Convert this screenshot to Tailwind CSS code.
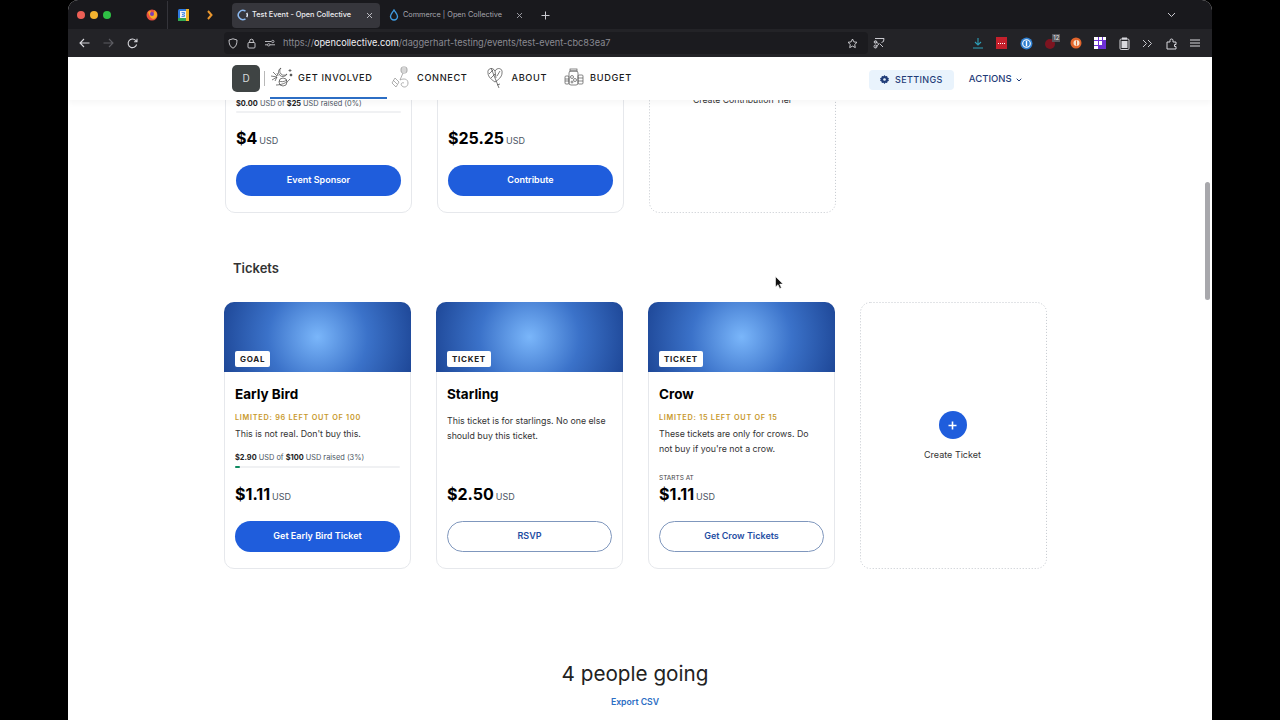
<!DOCTYPE html>
<html lang="en">
<head>
    <meta charset="UTF-8">
    <title>Test Event - Open Collective</title>
    <script src="https://cdn.jsdelivr.net/npm/@tailwindcss/browser@4"></script>
</head>
<body class="bg-black font-['Inter',sans-serif] overflow-hidden">
<div class="ml-[68px] w-[1144px] h-[720px] rounded-t-[10px] overflow-hidden flex flex-col bg-white relative">

    <!-- tab bar -->
    <div class="h-[29px] pt-[1px] bg-[#19191d] flex items-center shrink-0 text-[#e4e4e8]">
        <div class="flex gap-[5px] ml-[9px]">
            <span class="w-[8px] h-[8px] rounded-full bg-[#ec5f56]"></span>
            <span class="w-[8px] h-[8px] rounded-full bg-[#f4b32f]"></span>
            <span class="w-[8px] h-[8px] rounded-full bg-[#2fc045]"></span>
        </div>
        <svg class="ml-[35px]" width="12" height="12" viewBox="0 0 12 12"><circle cx="6" cy="6" r="5.5" fill="#e8503f"/><path d="M2 3c1 3 2 6 5 7 2 0 4-2 4-4 0-2-1-4-3-5 1 2 0 3-2 3-1 0-2-1-1-2-1 0-2 0-3 1z" fill="#f9a825"/><circle cx="6" cy="5" r="2" fill="#7b3fb8"/></svg>
        <span class="ml-[9px] w-px h-[29px] bg-[#34343a]"></span>
        <svg class="ml-[10px]" width="11" height="12" viewBox="0 0 11 12"><rect width="11" height="12" rx="1.5" fill="#2f7be0"/><rect x="8" width="3" height="12" fill="#f0b429"/><rect y="9" width="8" height="3" fill="#32a852"/><rect x="2" y="2" width="6" height="7" fill="#f1f1f4"/><path d="M3.5 3.5h3v1.5h-2v1h2v1.5h-3" fill="none" stroke="#2f7be0" stroke-width=".8"/></svg>
        <svg class="ml-[18px]" width="6" height="10" viewBox="0 0 6 10"><path d="M1 1l3.5 4L1 9" fill="none" stroke="#e8962e" stroke-width="2"/></svg>
        <!-- active tab -->
        <div class="ml-[19px] w-[148px] h-[25px] rounded-[4px] bg-[#36363c] flex items-center pl-[5px]">
            <svg width="12" height="12" viewBox="0 0 12 12"><path d="M8.5 2.2A4.6 4.6 0 1 0 8.5 9.8" fill="none" stroke="#8ab8f0" stroke-width="1.5"/><path d="M9.8 3.8a4.6 4.6 0 0 1 0 4.4" fill="none" stroke="#dfe8f5" stroke-width="1.5"/></svg>
            <span class="ml-[3px] w-[114px] text-[7.300px] font-medium text-[#ececf0] whitespace-nowrap">Test Event - Open Collective</span>
            <svg width="7" height="7" viewBox="0 0 7 7"><path d="M1 1l5 5M6 1L1 6" stroke="#c9c9cf" stroke-width=".9"/></svg>
        </div>
        <!-- second tab -->
        <div class="w-[150px] flex items-center pl-[9px]">
            <svg width="10" height="12" viewBox="0 0 10 12"><path d="M5 1C3.5 3.5 1.500 5 1.500 7.500a3.500 3.500 0 0 0 7 0C8.500 5 6.500 3.500 5 1z" fill="none" stroke="#3f9be0" stroke-width="1.400"/></svg>
            <span class="ml-[4px] w-[113px] text-[7.300px] text-[#a6a6ad] whitespace-nowrap">Commerce | Open Collective</span>
            <svg width="7" height="7" viewBox="0 0 7 7"><path d="M1 1l5 5M6 1L1 6" stroke="#a6a6ad" stroke-width=".9"/></svg>
        </div>
        <svg class="ml-[11px]" width="9" height="9" viewBox="0 0 9 9"><path d="M4.500 .5v8M.5 4.500h8" stroke="#c9c9cf" stroke-width="1"/></svg>
        <svg class="ml-[617px]" width="9" height="6" viewBox="0 0 9 6"><path d="M1 1l3.500 3.500L8 1" fill="none" stroke="#c9c9cf" stroke-width="1"/></svg>
    </div>

    <!-- toolbar -->
    <div class="h-[28px] bg-[#232327] flex items-center shrink-0">
        <svg class="ml-[11px]" width="11" height="10" viewBox="0 0 11 10"><path d="M10.500 5H1M5 1L1 5l4 4" fill="none" stroke="#d8d8dd" stroke-width="1.100"/></svg>
        <svg class="ml-[13px]" width="11" height="10" viewBox="0 0 11 10"><path d="M.5 5H10M6 1l4 4-4 4" fill="none" stroke="#5c5c62" stroke-width="1.100"/></svg>
        <svg class="ml-[13px]" width="11" height="11" viewBox="0 0 11 11"><path d="M9.600 6.500A4.300 4.300 0 1 1 8.600 2.400L10 3.600M10 .8v2.900H7.100" fill="none" stroke="#d8d8dd" stroke-width="1.100"/></svg>
        <!-- url bar -->
        <div class="ml-[86px] w-[644px] h-[22px] bg-[#1b1b1f] rounded-[4px] flex items-center pl-[4px]">
            <svg width="10" height="11" viewBox="0 0 10 11"><path d="M5 .8l4 1.200c0 4-1 6.800-4 8.200C2 8.800 1 6 1 2z" fill="none" stroke="#d2d2d7" stroke-width=".9"/></svg>
            <svg class="ml-[9px]" width="9" height="11" viewBox="0 0 9 11"><rect x="1" y="4.500" width="7" height="5.500" rx="1" fill="none" stroke="#d2d2d7" stroke-width=".9"/><path d="M2.700 4.500V3a1.800 1.800 0 0 1 3.600 0v1.500" fill="none" stroke="#d2d2d7" stroke-width=".9"/></svg>
            <svg class="ml-[9px]" width="10" height="8" viewBox="0 0 10 8"><path d="M0 2.500h6M0 5.800h2.500M5 5.800h5" stroke="#c9c9cf" stroke-width=".9"/><circle cx="7.800" cy="2.500" r="1.200" fill="none" stroke="#c9c9cf" stroke-width=".8"/><circle cx="3.700" cy="5.800" r="1.200" fill="none" stroke="#c9c9cf" stroke-width=".8"/></svg>
            <span class="ml-[8px] w-[564px] text-[9.200px] text-[#8a8a92] whitespace-nowrap">https://<span class="text-[#f0f0f3]">opencollective.com</span>/daggerhart-testing/events/test-event-cbc83ea7</span>
            <svg width="11" height="11" viewBox="0 0 11 11"><path d="M5.500 1l1.400 2.900 3.100.4-2.300 2.200.6 3.100-2.800-1.500-2.800 1.500.6-3.100L1 4.300l3.100-.4z" fill="none" stroke="#d8d8dd" stroke-width=".9"/></svg>
        </div>
        <svg class="ml-[5px]" width="12" height="12" viewBox="0 0 12 12"><path d="M2 1.500h9l-.5 3-2 1M1.500 4.500l4 2M2 10.500l4.500-4M7 7l3 3" fill="none" stroke="#c9c9cf" stroke-width="1"/><circle cx="2.500" cy="9.500" r="1.500" fill="none" stroke="#c9c9cf"/><circle cx="2.500" cy="5" r="1.300" fill="none" stroke="#c9c9cf"/></svg>
        <div class="ml-[87px] flex items-center gap-[12.450px]">
            <svg width="12" height="12" viewBox="0 0 12 12"><path d="M6 1v7M3 5l3 3 3-3M1 11h10" fill="none" stroke="#2e9fb8" stroke-width="1.100"/></svg>
            <span class="w-[11px] h-[12px] bg-[#c4202c] flex items-center justify-center"><span class="w-[7px] border-t border-dotted border-white"></span></span>
            <svg width="13" height="13" viewBox="0 0 13 13"><circle cx="6.500" cy="6.500" r="6" fill="#2f7fd0"/><circle cx="6.500" cy="6.500" r="3.800" fill="none" stroke="#fff" stroke-width="1.100"/><rect x="5.800" y="3.800" width="1.400" height="5.400" fill="#fff"/></svg>
            <span class="w-[12px] h-[12px] relative"><span class="absolute left-0 bottom-0 w-[10px] h-[10px] rounded-full bg-[#7c1420]"></span><span class="absolute -top-[3px] -right-[3px] px-[1px] bg-[#55555b] text-[6px] leading-[8px] text-[#e8e8e8]">12</span></span>
            <svg width="12" height="12" viewBox="0 0 12 12"><circle cx="6" cy="6" r="5.500" fill="#e2652c"/><circle cx="6.500" cy="6" r="3" fill="#f6e3cf"/><path d="M6 3.500h1v5H6z" fill="#e2652c"/></svg>
            <span class="w-[12px] h-[12px] bg-[#6d2fd6] grid grid-cols-3 grid-rows-3 gap-px"><span class="bg-white"></span><span class="bg-white"></span><span class="bg-white"></span><span class="bg-white"></span><span class="bg-white"></span><span></span><span class="bg-white"></span><span></span><span></span></span>
            <svg width="11" height="13" viewBox="0 0 11 13"><rect x="1" y="2" width="9" height="10.500" rx="1.200" fill="none" stroke="#d8d8dd" stroke-width="1"/><rect x="2.500" y="4" width="6" height="7" fill="#d8d8dd"/><rect x="3" y=".5" width="5" height="2" fill="#d8d8dd"/></svg>
            <svg width="11" height="9" viewBox="0 0 11 9"><path d="M1 1l3.500 3.500L1 8M6 1l3.500 3.500L6 8" fill="none" stroke="#c9c9cf" stroke-width="1"/></svg>
            <svg width="12" height="13" viewBox="0 0 12 13"><path d="M1 12V5h3V3.500a1.500 1.500 0 0 1 3 0V5h3v2.500H8.500v2H10V12z" fill="none" stroke="#d8d8dd" stroke-width="1"/></svg>
            <svg width="10" height="8" viewBox="0 0 10 8"><path d="M0 1h10M0 4h10M0 7h10" stroke="#d8d8dd" stroke-width="1"/></svg>
        </div>
    </div>

    <!-- page -->
    <div class="flex-1 relative overflow-hidden bg-white text-[#111]">

        <!-- sticky nav, content scrolls underneath -->
        <div class="absolute z-10 inset-x-0 top-0 h-[43px] bg-white shadow-[0_3px_6px_rgba(0,0,0,0.04)] flex items-center pl-[164px] pr-[8px]">
            <div class="w-[28px] h-[27px] rounded-[5px] bg-[#3f4444] text-[#d8dcdc] text-[10px] flex items-center justify-center -mt-[1px]">D</div>
            <span class="ml-[4px] w-px h-[15px] bg-[#b8b8b8] -mt-[1px]"></span>
            <div class="relative h-full flex items-center ml-[5px] w-[117px] -mt-[2px]">
                <svg width="24" height="21" viewBox="0 0 24 21" fill="none" stroke="#444" stroke-width=".7"><path d="M11 1a4.500 4.500 0 1 0 6 6 3.500 3.500 0 0 1-6-6z"/><path d="M1 9l6 1M3 5l4 4M2 13l5-3M7 10l-2 4M7 6l1 3"/><circle cx="13" cy="15" r="4"/><path d="M6 18c5 0 11-2 14-6M9 14c2 1 5 1 8-1"/><circle cx="21" cy="8" r="1" fill="#444"/><path d="M20 2v3M18.500 3.500h3"/></svg>
                <span class="ml-[4px] text-[9.200px] font-medium tracking-[0.07em] text-[#1a1a1a] whitespace-nowrap">GET INVOLVED</span>
                <span class="absolute left-0 right-0 bottom-0 h-[2px] bg-[#2c6ec4]"></span>
            </div>
            <svg class="ml-[4px] -mt-[2px]" width="20" height="24" viewBox="0 0 20 24" fill="none" stroke="#9a9a9a" stroke-width=".8"><rect x="10" y="1" width="6" height="6" rx="2"/><path d="M10 3h6M10 5h6M12 7l-3 7M4 12l4 4-3 5-4-4zM2 14l4 4M9 14c4-2 8-1 8 3s-4 5-6 3 0-4 2-3"/></svg>
            <span class="ml-[6px] text-[9.200px] font-medium tracking-[0.07em] text-[#1a1a1a] -mt-[2px]">CONNECT</span>
            <svg class="ml-[19px] -mt-[2px]" width="18" height="24" viewBox="0 0 18 24" fill="none" stroke="#444" stroke-width=".7"><path d="M9 5C7 1 1 2 2 7c0 4 4 7 7 9 3-2 7-5 7-9 1-5-5-6-7-2z"/><path d="M5 2l8 20M11 19l3-1M9 8L5 12M7 4L3 8M11 10l3-5M9 5l1 7"/></svg>
            <span class="ml-[7px] text-[9.200px] font-medium tracking-[0.07em] text-[#1a1a1a] -mt-[2px]">ABOUT</span>
            <svg class="ml-[17px] -mt-[2px]" width="20" height="19" viewBox="0 0 20 19" fill="none" stroke="#555" stroke-width=".7"><rect x="5" y="3" width="9" height="14" rx="2"/><rect x="6" y="1" width="7" height="2"/><rect x="1" y="8" width="4" height="8" rx="1"/><rect x="14" y="7" width="5" height="9" rx="1"/><circle cx="8" cy="9" r="1.500"/><circle cx="11" cy="12" r="1.500"/><circle cx="8" cy="14" r="1"/><path d="M1 11h4M1 13h4M14 10h5M14 13h5"/></svg>
            <span class="ml-[6px] text-[9.200px] font-medium tracking-[0.07em] text-[#1a1a1a] -mt-[2px]">BUDGET</span>
            <div class="ml-[237px] mt-[2px] h-[20px] w-[85px] rounded-[4px] bg-[#e9f3fc] flex items-center justify-center gap-[6px] text-[9px] font-medium tracking-[0.04em] text-[#1f3c78]">
                <svg width="9" height="9" viewBox="0 0 9 9"><path d="M4.500 0l1 1.300 1.600-.3.400 1.600 1.500.6-.7 1.300.7 1.300-1.500.6-.4 1.600-1.600-.3-1 1.300-1-1.300-1.600.3-.4-1.600L0 5.800l.7-1.300L0 3.200l1.500-.6.4-1.600 1.600.3z" fill="#1f3c78"/><circle cx="4.500" cy="4.500" r="1.300" fill="#e9f3fc"/></svg>
                SETTINGS
            </div>
            <div class="ml-[15px] mt-[2px] flex items-center gap-[4px] text-[9.500px] font-medium text-[#1f3c78]">
                ACTIONS
                <svg width="6" height="4" viewBox="0 0 6 4"><path d="M.7.700L3 3l2.300-2.300" fill="none" stroke="#1f3c78"/></svg>
            </div>
        </div>

        <!-- contribution tiers, scrolled past the top -->
        <div class="flex gap-[25px] ml-[157px] -mt-[111px] h-[267px]">
            <div class="w-[187px] border border-[#e6e8ec] rounded-[10px] flex flex-col justify-end px-[10px] pb-[16px]">
                <p class="text-[7.400px] leading-[10px] text-[#4b5563]"><b class="text-[#222]">$0.00</b> USD of <b class="text-[#222]">$25</b> USD raised (0%)</p>
                <div class="mt-[2px] h-[2px] bg-[#f0f1f3] rounded-full"></div>
                <div class="mt-[14px] h-[24px] flex items-baseline"><span class="text-[16px] leading-[22px] font-bold text-black">$4</span><span class="ml-[2px] text-[9px] text-[#4b5563]">USD</span></div>
                <a class="mt-[14px] h-[31px] pb-[1px] rounded-full bg-[#1f5ddc] text-white text-[9px] font-semibold flex items-center justify-center">Event Sponsor</a>
            </div>
            <div class="w-[187px] border border-[#e6e8ec] rounded-[10px] flex flex-col justify-end px-[10px] pb-[16px]">
                <div class="h-[24px] flex items-baseline"><span class="text-[16px] leading-[22px] font-bold text-black">$25.25</span><span class="ml-[2px] text-[9px] text-[#4b5563]">USD</span></div>
                <a class="mt-[14px] h-[31px] pb-[1px] rounded-full bg-[#1f5ddc] text-white text-[9px] font-semibold flex items-center justify-center">Contribute</a>
            </div>
            <div class="relative w-[187px] flex flex-col items-center">
                <svg class="absolute inset-0" width="187" height="267"><rect x=".5" y=".5" width="186" height="266" rx="10" fill="none" stroke="#c4c8ce" stroke-dasharray="1 2"/></svg>
                <span class="mt-[148px] text-[8.700px] leading-[12px] text-[#333]">Create Contribution Tier</span>
            </div>
        </div>

        <h2 class="ml-[165px] mt-[44px] text-[13px] leading-[22px] font-semibold text-[#333]">Tickets</h2>

        <!-- tickets -->
        <div class="flex gap-[25px] ml-[156px] mt-[23px] h-[267px]">
            <div class="w-[187px] border border-[#e6e8ec] rounded-[10px] flex flex-col">
                <div class="-mx-px -mt-px rounded-t-[10px] h-[70px] shrink-0 bg-[radial-gradient(circle_at_center,#7ab6fa_0%,#3b72c9_50%,#1e4797_100%)] flex items-end pl-[11px] pb-[5px]">
                    <span class="h-[16px] px-[5px] rounded-[2px] bg-white text-[8px] font-bold tracking-[0.09em] text-[#222] flex items-center">GOAL</span>
                </div>
                <div class="flex-1 flex flex-col px-[10px] pb-[16px]">
                    <h3 class="mt-[12px] text-[13.500px] leading-[20px] font-bold text-black">Early Bird</h3>
                    <p class="mt-[8px] text-[7.300px] leading-[12px] font-semibold tracking-[0.1em] text-[#c8992c]">LIMITED: 96 LEFT OUT OF 100</p>
                    <p class="mt-[2px] text-[8.800px] leading-[15px] text-[#333]">This is not real. Don't buy this.</p>
                    <p class="mt-[11px] text-[7.400px] leading-[12px] text-[#4b5563]"><b class="text-[#222]">$2.90</b> USD of <b class="text-[#222]">$100</b> USD raised (3%)</p>
                    <div class="mt-[2px] h-[2px] bg-[#f0f1f3] rounded-full"><div class="h-full w-[3%] bg-[#0e8a5f] rounded-full"></div></div>
                    <div class="mt-auto h-[24px] flex items-baseline"><span class="text-[16px] leading-[22px] font-bold text-black">$1.11</span><span class="ml-[2px] text-[9px] text-[#4b5563]">USD</span></div>
                    <a class="mt-[14px] h-[31px] pb-[1px] rounded-full bg-[#1f5ddc] text-white text-[9px] font-semibold flex items-center justify-center">Get Early Bird Ticket</a>
                </div>
            </div>

            <div class="w-[187px] border border-[#e6e8ec] rounded-[10px] flex flex-col">
                <div class="-mx-px -mt-px rounded-t-[10px] h-[70px] shrink-0 bg-[radial-gradient(circle_at_center,#7ab6fa_0%,#3b72c9_50%,#1e4797_100%)] flex items-end pl-[11px] pb-[5px]">
                    <span class="h-[16px] px-[5px] rounded-[2px] bg-white text-[8px] font-bold tracking-[0.09em] text-[#222] flex items-center">TICKET</span>
                </div>
                <div class="flex-1 flex flex-col px-[10px] pb-[16px]">
                    <h3 class="mt-[12px] text-[13.500px] leading-[20px] font-bold text-black">Starling</h3>
                    <p class="mt-[8.500px] text-[8.800px] leading-[15px] text-[#333]">This ticket is for starlings. No one else should buy this ticket.</p>
                    <div class="mt-auto h-[24px] flex items-baseline"><span class="text-[16px] leading-[22px] font-bold text-black">$2.50</span><span class="ml-[2px] text-[9px] text-[#4b5563]">USD</span></div>
                    <a class="mt-[14px] h-[31px] pb-[1px] rounded-full border border-[#7f97bd] text-[#1f4ea3] text-[9px] font-semibold flex items-center justify-center">RSVP</a>
                </div>
            </div>

            <div class="w-[187px] border border-[#e6e8ec] rounded-[10px] flex flex-col">
                <div class="-mx-px -mt-px rounded-t-[10px] h-[70px] shrink-0 bg-[radial-gradient(circle_at_center,#7ab6fa_0%,#3b72c9_50%,#1e4797_100%)] flex items-end pl-[11px] pb-[5px]">
                    <span class="h-[16px] px-[5px] rounded-[2px] bg-white text-[8px] font-bold tracking-[0.09em] text-[#222] flex items-center">TICKET</span>
                </div>
                <div class="flex-1 flex flex-col px-[10px] pb-[16px]">
                    <h3 class="mt-[12px] text-[13.500px] leading-[20px] font-bold text-black">Crow</h3>
                    <p class="mt-[8px] text-[7.300px] leading-[12px] font-semibold tracking-[0.1em] text-[#c8992c]">LIMITED: 15 LEFT OUT OF 15</p>
                    <p class="mt-[2px] text-[8.800px] leading-[15px] text-[#333]">These tickets are only for crows. Do not buy if you're not a crow.</p>
                    <p class="mt-auto text-[6.500px] leading-[10px] text-[#444]">STARTS AT</p>
                    <div class="h-[24px] flex items-baseline"><span class="text-[16px] leading-[22px] font-bold text-black">$1.11</span><span class="ml-[2px] text-[9px] text-[#4b5563]">USD</span></div>
                    <a class="mt-[14px] h-[31px] pb-[1px] rounded-full border border-[#7f97bd] text-[#1f4ea3] text-[9px] font-semibold flex items-center justify-center">Get Crow Tickets</a>
                </div>
            </div>

            <div class="relative w-[187px] pr-[2px] flex flex-col items-center">
                <svg class="absolute inset-0" width="187" height="267"><rect x=".5" y=".5" width="186" height="266" rx="10" fill="none" stroke="#c4c8ce" stroke-dasharray="1 2"/></svg>
                <span class="mt-[109px] w-[28px] h-[28px] rounded-full bg-[#1f5ddc] flex items-center justify-center">
                    <svg width="9" height="9" viewBox="0 0 9 9"><path d="M4.500 .5v8M.5 4.500h8" stroke="#fff" stroke-width="1.600"/></svg>
                </span>
                <span class="mt-[10px] text-[9px] leading-[12px] text-[#333]">Create Ticket</span>
            </div>
        </div>

        <div class="w-[1134px] flex flex-col items-center">
            <h2 class="mt-[90px] text-[20.700px] leading-[30px] text-[#222]">4 people going</h2>
            <a class="mt-[7px] text-[8.700px] leading-[12px] font-semibold text-[#2c6ec4]">Export CSV</a>
        </div>

        <!-- scrollbar -->
        <div class="absolute top-[125px] right-[2px] w-[5px] h-[118px] rounded-full bg-[#a8a8ac]"></div>

        <!-- mouse pointer -->
        <svg class="absolute left-[707px] top-[219px]" width="9" height="13" viewBox="0 0 9 13"><path d="M.5.500v10.500l2.500-2.300 1.700 3.800 1.700-.8-1.700-3.600h3.300z" fill="#111" stroke="#fff" stroke-width=".6"/></svg>
    </div>
</div>
</body>
</html>
